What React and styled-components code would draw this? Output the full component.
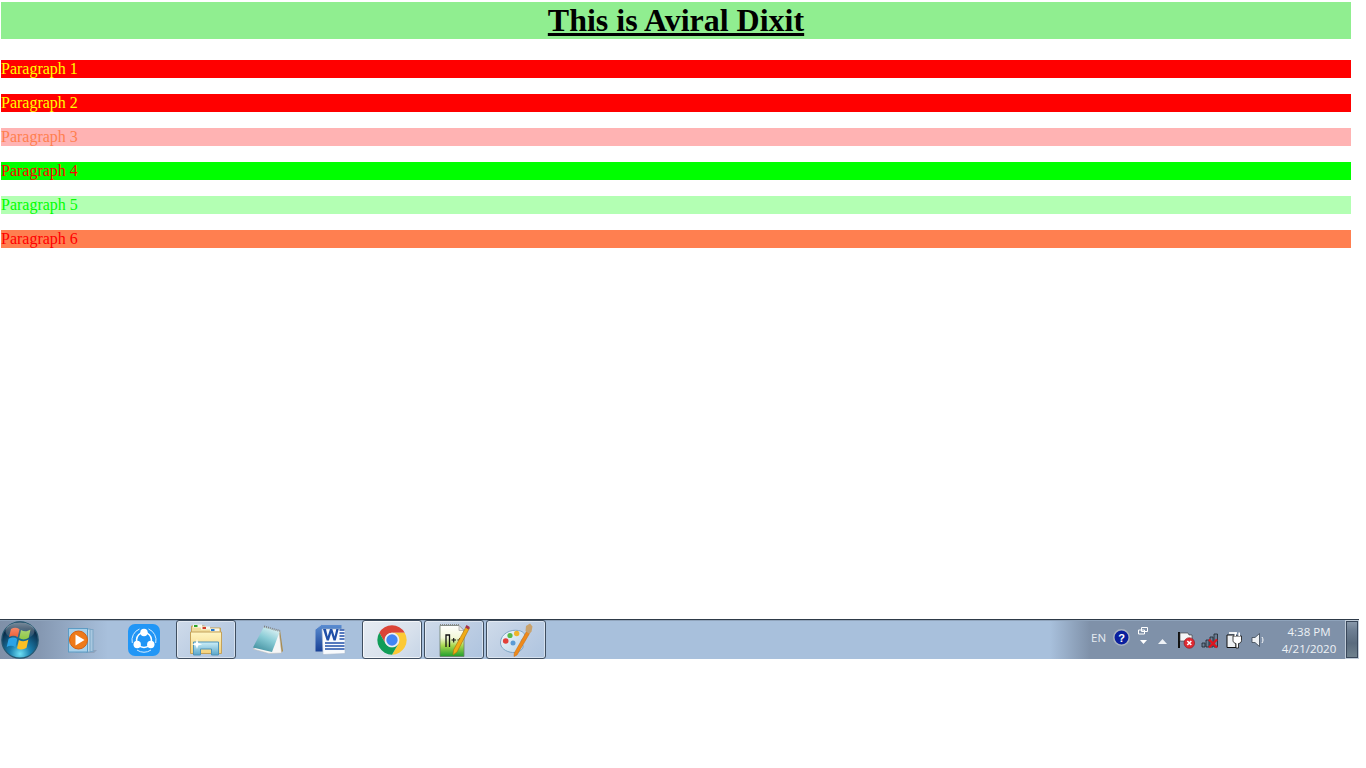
import React from "react";
import styled, { createGlobalStyle } from "styled-components";

const Global = createGlobalStyle`
  html, body { margin: 0; padding: 0; background: #fff; }
  body { font-family: "Liberation Serif", "Times New Roman", serif; overflow: hidden; }
`;

const Screen = styled.div`
  display: flex;
  flex-direction: column;
  width: 1366px;
  height: 768px;
`;

const Document = styled.main`
  display: flex;
  flex-direction: column;
  gap: 16px;
  box-sizing: border-box;
  height: 619px;
  padding: 2px 15px 0 1px;
`;

const Heading = styled.h1`
  margin: 0 0 5px;
  background: #90ee90;
  color: #000;
  font-size: 32px;
  line-height: 37px;
  font-weight: bold;
  text-align: center;
  text-decoration: underline;
`;

const Paragraph = styled.p`
  margin: 0;
  height: 18px;
  font-size: 16px;
  line-height: 18px;
  background: ${(p) => p.$bg};
  color: ${(p) => p.$fg};
`;

const Taskbar = styled.footer`
  display: flex;
  align-items: stretch;
  box-sizing: border-box;
  width: 1359px;
  height: 40px;
  border-top: 1px solid #2e3a48;
  background: linear-gradient(90deg, #7f90a8 0, #8598b2 40px, #a8c0dc 108px, #a8c0dc 1050px, #7f91a9 1090px, #7f91a9 100%);
  box-shadow: inset 0 1px 0 #8fa3bb;
`;

const StartOrb = styled.div`
  display: flex;
  align-items: center;
  justify-content: center;
  width: 40px;
  margin-right: 12px;
`;

const TaskList = styled.div`
  display: flex;
  gap: 2px;
`;

const TaskButton = styled.div`
  display: flex;
  align-items: center;
  justify-content: center;
  box-sizing: border-box;
  width: 60px;
  height: 39px;
  border-radius: 3px;
  ${(p) =>
    p.$state === "open" &&
    `
    border: 1px solid #3f4e60;
    box-shadow: inset 0 0 0 1px rgba(255,255,255,.45);
    background: linear-gradient(135deg, #cfdbea 0%, #bccde3 55%, #aec4df 100%);
  `}
  ${(p) =>
    p.$state === "active" &&
    `
    border: 1px solid #3f4e60;
    box-shadow: inset 0 0 0 1px rgba(255,255,255,.7);
    background: linear-gradient(135deg, #e6ecf3 0%, #d8e1ec 60%, #c6d4e6 100%);
  `}
`;

const Tray = styled.div`
  display: flex;
  align-items: center;
  margin-left: auto;
  height: 39px;
`;

const Lang = styled.span`
  width: 21px;
  margin-bottom: 5px;
  font-family: "Open Sans", "Noto Sans", sans-serif;
  font-size: 11.5px;
  color: #e6ebf1;
`;

const TraySlot = styled.div`
  display: flex;
  align-items: center;
  justify-content: center;
  width: ${(p) => p.$w || 24}px;
`;

const HelpSlot = styled(TraySlot)`
  margin-bottom: 5px;
`;

const LayoutSwitch = styled(TraySlot)`
  flex-direction: column;
  box-sizing: border-box;
  padding-left: 6px;
  margin-bottom: 8px;
`;

const Clock = styled.div`
  display: flex;
  flex-direction: column;
  align-items: center;
  gap: 2px;
  width: 70px;
  margin: 0 1px 0 4px;
  font-family: "Open Sans", "Noto Sans", sans-serif;
  font-size: 11.5px;
  line-height: 15px;
  color: #eef2f6;
`;

const ShowDesktop = styled.div`
  box-sizing: border-box;
  width: 14px;
  height: 39px;
  border: 1px solid #c0ccd9;
  outline: 1px solid #39475a;
  outline-offset: -2px;
  background: linear-gradient(180deg, #8b9aac 0, #6e7f93 25%, #5a6b7e 60%, #71838f 100%);
`;

const Orb = () => (
  <svg width="38" height="38" viewBox="0 0 38 38">
    <defs>
      <radialGradient id="orbG" cx="50%" cy="88%" r="72%">
        <stop offset="0" stopColor="#6fe0f5" />
        <stop offset=".4" stopColor="#1a7fae" />
        <stop offset="1" stopColor="#0b2a47" />
      </radialGradient>
      <linearGradient id="orbS" x1="0" y1="0" x2="0" y2="1">
        <stop offset="0" stopColor="#fff" stopOpacity=".45" />
        <stop offset="1" stopColor="#fff" stopOpacity=".02" />
      </linearGradient>
    </defs>
    <circle cx="19" cy="19" r="18.2" fill="url(#orbG)" stroke="#24566f" strokeWidth="1.2" />
    <path d="M10 8c3-1.800 5.800-1.600 8.500 .2l-1.800 8c-2.700-1.800-5.700-1.800-8.700-.2z" fill="#ee5226" />
    <path d="M20 9c3 1.800 6 1.800 9.500-.5l-1.800 8.200c-3.300 2.200-6.500 2.200-9.500 .4z" fill="#8cc63f" />
    <path d="M7.600 17.800c3-1.600 6-1.600 8.700 .2l-1.900 8.200c-2.800-1.800-5.800-1.800-8.700-.2z" fill="#2ba3e6" />
    <path d="M17.900 18.900c3 1.800 6.200 1.800 9.500-.4l-1.900 8.300c-3.300 2.200-6.500 2.200-9.500 .4z" fill="#fbbf24" />
    <ellipse cx="19" cy="10" rx="14.500" ry="8.500" fill="url(#orbS)" />
  </svg>
);

const MediaPlayer = () => (
  <svg width="32" height="32" viewBox="0 0 32 32">
    <path d="M20 26h11l-3 3h-8z" fill="#7d8ea3" opacity=".5" />
    <rect x="13" y="5.500" width="14" height="22" fill="#a9c8e0" stroke="#7ba6c6" />
    <rect x="10" y="5" width="14" height="23" fill="#bcd7ea" stroke="#7ba6c6" />
    <rect x="2.500" y="4.500" width="19" height="23.500" fill="#a8d0ea" stroke="#5d9cc4" />
    <circle cx="12.500" cy="16" r="9" fill="#ee7a1a" stroke="#d55f0e" />
    <path d="M9.500 10.500 18.500 16l-9 5.500z" fill="#fff" />
  </svg>
);

const ShareIt = () => (
  <svg width="32" height="32" viewBox="0 0 32 32">
    <rect width="32" height="32" rx="7" fill="#2196f6" />
    <path d="M4.300 19A12 12 0 0 1 11.500 5M20.500 5A12 12 0 0 1 27.700 19M23 26A12 12 0 0 1 9 26" fill="none" stroke="#d4ecff" strokeWidth="1" />
    <circle cx="16" cy="16" r="7.500" fill="none" stroke="#fff" strokeWidth="1.500" />
    <circle cx="16" cy="8.500" r="3.700" fill="#fff" />
    <circle cx="9.200" cy="20.500" r="3.700" fill="#fff" />
    <circle cx="22.800" cy="20.500" r="3.700" fill="#fff" />
  </svg>
);

const Explorer = () => (
  <svg width="34" height="33" viewBox="0 0 34 33">
    <defs>
      <linearGradient id="fold" x1="0" y1="0" x2="0" y2="1">
        <stop offset="0" stopColor="#fff6c4" />
        <stop offset="1" stopColor="#f5d27c" />
      </linearGradient>
      <linearGradient id="stand" x1="0" y1="0" x2="0" y2="1">
        <stop offset="0" stopColor="#cdeff8" />
        <stop offset="1" stopColor="#5aa6c9" />
      </linearGradient>
    </defs>
    <path d="M2.500 3h13l2 2h14v7h-29z" fill="#efdc9b" stroke="#c4a25a" />
    <rect x="4" y="1.500" width="9" height="3" fill="#f8f8ee" />
    <rect x="5" y="2" width="3.500" height="2" fill="#2ba52b" />
    <rect x="12" y="3.500" width="9" height="3" fill="#f8f8ee" />
    <rect x="13.500" y="4" width="3.500" height="2" fill="#d23b2b" />
    <rect x="21" y="5.500" width="9" height="3" fill="#f8f8ee" />
    <rect x="22" y="6" width="3.500" height="2" fill="#2478d0" />
    <path d="M1.500 9h31v21.500h-31z" fill="url(#fold)" stroke="#c4a25a" />
    <path d="M4.500 19h25v13h-7v-6h-11v6h-7z" fill="url(#stand)" stroke="#4f93b8" />
    <path d="M8 16l1.200 4 4 1.200-4 1.200L8 26l-1.200-3.600-4-1.200 4-1.200z" fill="#fff" />
  </svg>
);

const NotepadIcon = () => (
  <svg width="34" height="32" viewBox="0 0 34 32">
    <defs>
      <linearGradient id="pad" x1=".7" y1="0" x2=".2" y2="1">
        <stop offset="0" stopColor="#dff3f5" />
        <stop offset=".45" stopColor="#8accd6" />
        <stop offset="1" stopColor="#3f8d9d" />
      </linearGradient>
    </defs>
    <path d="M29 6 32 27l-2 2-3-19z" fill="#a88a4c" />
    <path d="M28 7 30.500 29 18 29.500 2 25l2-1z" fill="#f6f6f6" stroke="#bcbcbc" strokeWidth=".5" />
    <path d="M13 2.500 29 7l-8 21L2 23.500z" fill="url(#pad)" />
    <path d="M13 2.500 29 7" stroke="#7f7f7f" strokeWidth="2" strokeDasharray="1 1" />
  </svg>
);

const Word = () => (
  <svg width="32" height="32" viewBox="0 0 32 32">
    <defs>
      <linearGradient id="wblue" x1="0" y1="0" x2="0" y2="1">
        <stop offset="0" stopColor="#5b8ed2" />
        <stop offset="1" stopColor="#173f95" />
      </linearGradient>
    </defs>
    <path d="M1 5.500 7.500 .5H28v6L18 28H1z" fill="url(#wblue)" stroke="#a9bedb" />
    <path d="M8 5h23v24.500L9 30.500z" fill="#f8fafd" stroke="#aab8cc" strokeWidth=".6" />
    <path d="M9 5h3l1.700 7.500L16 5h2.300l2.300 7.500L22.300 5h2.400l-3 11.500h-2.200L17.200 9l-2.300 7.500h-2.200z" fill="#1f4fa8" />
    <path d="M25.500 6h5M25.500 9h5M25.500 12h5M25.500 15h5M11 19h19.500M11 22h19.500M11 25h19.500" stroke="#1f4fa8" strokeWidth="1.400" />
  </svg>
);

const Chrome = () => (
  <svg width="32" height="32" viewBox="0 0 48 48">
    <path d="M4.950 13A22 22 0 0 1 43.050 13H24A11 11 0 0 0 14.470 29.500z" fill="#db4437" />
    <path d="M43.050 13A22 22 0 0 1 24 46L33.530 29.500A11 11 0 0 0 24 13z" fill="#fcc934" />
    <path d="M24 46A22 22 0 0 1 4.950 13L14.470 29.500A11 11 0 0 0 33.530 29.500z" fill="#109d58" />
    <circle cx="24" cy="24" r="10.800" fill="#f1f1f1" />
    <circle cx="24" cy="24" r="8.500" fill="#4285f4" />
  </svg>
);

const NotepadPlus = () => (
  <svg width="32" height="34" viewBox="0 0 32 34">
    <defs>
      <linearGradient id="npp" x1="0" y1="0" x2="0" y2="1">
        <stop offset="0" stopColor="#fff" />
        <stop offset=".4" stopColor="#f2f8d8" />
        <stop offset=".65" stopColor="#a9d84e" />
        <stop offset="1" stopColor="#1f9e2e" />
      </linearGradient>
    </defs>
    <path d="M2 2.500h19l5 5v26H2z" fill="url(#npp)" stroke="#6d7f6d" strokeWidth=".8" />
    <path d="M2 2h19" stroke="#8a8a8a" strokeWidth="2" strokeDasharray="1 1" />
    <path d="M21 2.500v5h5z" fill="#e8e8e8" stroke="#999" strokeWidth=".6" />
    <path d="M8 24V12h3.500v12" fill="none" stroke="#111" strokeWidth="1.300" />
    <path d="M13.500 17h4.500M15.700 15v4.500M19.500 17h4.500M21.700 15v4.500" fill="none" stroke="#111" strokeWidth="1.100" />
    <path d="M28.500 3 31.500 5 19 29l-4 3 .5-5z" fill="#f0ac17" stroke="#a96f0a" strokeWidth=".6" />
    <path d="M28.500 2 31.800 4 30.500 6.500 27.300 4.500z" fill="#a5324e" />
  </svg>
);

const Paint = () => (
  <svg width="34" height="34" viewBox="0 0 34 34">
    <defs>
      <linearGradient id="pal" x1="0" y1="0" x2="1" y2="1">
        <stop offset="0" stopColor="#f4f8fb" />
        <stop offset="1" stopColor="#b8d3e8" />
      </linearGradient>
    </defs>
    <path d="M1.500 19C2 11 11 6 19.500 7.500c6 1 7.500 5 5 7.500-3 2.500-3 4.500-1 6.500 2.500 3-2 8.500-10 8C7 29 1 25 1.500 19z" fill="url(#pal)" stroke="#7ea5c6" />
    <circle cx="6.700" cy="18" r="2.800" fill="#e2403a" />
    <circle cx="11" cy="12.500" r="2.600" fill="#58b94a" />
    <circle cx="17.700" cy="10.500" r="2.700" fill="#f0b429" />
    <circle cx="14" cy="20" r="2.500" fill="#5b9bd5" />
    <path d="M27.500 8.500 30.500 10.500 18 32l-3 1.500 .3-3.500z" fill="#ee8a1b" stroke="#c76a0c" strokeWidth=".5" />
    <path d="M26.500 8 27 3l4-2.500 2.500 3-1 5-2 2.500z" fill="#c9a26c" />
  </svg>
);

const Help = () => (
  <svg width="17" height="17" viewBox="0 0 17 17">
    <circle cx="8.500" cy="8.500" r="7.700" fill="#0a1f9e" stroke="#aab4c0" strokeWidth="1.500" />
    <text x="8.500" y="12.500" textAnchor="middle" fontSize="11" fontWeight="bold" fontFamily="Liberation Sans, sans-serif" fill="#fff">?</text>
  </svg>
);

const Windows = () => (
  <svg width="10" height="8" viewBox="0 0 10 8">
    <path d="M3.500.500h6v4h-6zM.500 3h6v4h-6z" fill="#7f91a9" stroke="#fff" />
  </svg>
);

const Down = () => (
  <svg width="7" height="4" viewBox="0 0 7 4" style={{ marginTop: 5 }}>
    <path d="M0 0h7L3.500 4z" fill="#fff" />
  </svg>
);

const Up = () => (
  <svg width="9" height="5" viewBox="0 0 9 5" style={{ marginTop: 3 }}>
    <path d="M4.500 0 9 5H0z" fill="#eef2f6" />
  </svg>
);

const Cross = ({ x, y }) => (
  <path d={`M${x} ${y}l8 8m0-8l-8 8`} stroke="#e0141c" strokeWidth="2.400" fill="none" />
);

const Flag = () => (
  <svg width="18" height="18" viewBox="0 0 18 18">
    <path d="M2 1v16" stroke="#111" strokeWidth="2" />
    <path d="M3 2h8l1 2h3v6H3z" fill="#f4f6f8" stroke="#333" strokeWidth=".6" />
    <circle cx="12.300" cy="12" r="5.300" fill="#e02a32" stroke="#8a1a20" strokeWidth=".6" />
    <path d="M10.300 10l4 4m0-4l-4 4" stroke="#fff" strokeWidth="1.600" />
  </svg>
);

const Signal = () => (
  <svg width="18" height="18" viewBox="0 0 18 18">
    <path d="M1 12h3v4H1zM5 9h3v7H5zM9 6h3v10H9zM13 3h3.500v13H13z" fill="#6d7f94" stroke="#1d232b" strokeWidth=".8" />
    <Cross x={8} y={8.500} />
  </svg>
);

const Power = () => (
  <svg width="18" height="18" viewBox="0 0 18 18">
    <path d="M2 4h9v12.500H2z" fill="#eef1f4" stroke="#111" />
    <path d="M4 2h8" stroke="#eef1f4" strokeWidth="2" />
    <path d="M8 5h8.500v4.500c0 2-2 3-3 3v4.500h-2.500v-4.500c-1 0-3-1-3-3z" fill="#fff" stroke="#111" strokeWidth=".8" />
    <path d="M10.300 1.500v3.500M14.200 1.500v3.500" stroke="#fff" strokeWidth="1.600" />
  </svg>
);

const Speaker = () => (
  <svg width="16" height="18" viewBox="0 0 16 18">
    <path d="M2 6.500h3L9.500 2.500v13L5 11.500H2z" fill="#eef1f4" stroke="#3a4552" strokeWidth=".8" />
    <path d="M12 6c1.300 1.800 1.300 4.200 0 6" fill="none" stroke="#fff" strokeWidth="1" />
  </svg>
);

const paragraphs = [
  { text: "Paragraph 1", bg: "#ff0000", fg: "#ffff00" },
  { text: "Paragraph 2", bg: "#ff0000", fg: "#ffff00" },
  { text: "Paragraph 3", bg: "#ffb3b3", fg: "#ff7f50" },
  { text: "Paragraph 4", bg: "#00ff00", fg: "#ff0000" },
  { text: "Paragraph 5", bg: "#b3ffb3", fg: "#00ff00" },
  { text: "Paragraph 6", bg: "#ff7f50", fg: "#ff0000" },
];

const tasks = [
  { key: "wmp", Icon: MediaPlayer },
  { key: "share", Icon: ShareIt },
  { key: "explorer", Icon: Explorer, state: "open" },
  { key: "notepad", Icon: NotepadIcon },
  { key: "word", Icon: Word },
  { key: "chrome", Icon: Chrome, state: "active" },
  { key: "npp", Icon: NotepadPlus, state: "open" },
  { key: "paint", Icon: Paint, state: "open" },
];

export default function App() {
  return (
    <Screen>
      <Global />
      <Document>
        <Heading>This is Aviral Dixit</Heading>
        {paragraphs.map((p) => (
          <Paragraph key={p.text} $bg={p.bg} $fg={p.fg}>
            {p.text}
          </Paragraph>
        ))}
      </Document>
      <Taskbar>
        <StartOrb>
          <Orb />
        </StartOrb>
        <TaskList>
          {tasks.map(({ key, Icon, state }) => (
            <TaskButton key={key} $state={state}>
              <Icon />
            </TaskButton>
          ))}
        </TaskList>
        <Tray>
          <Lang>EN</Lang>
          <HelpSlot $w={18}><Help /></HelpSlot>
          <LayoutSwitch $w={20}>
            <Windows />
            <Down />
          </LayoutSwitch>
          <TraySlot $w={24}><Up /></TraySlot>
          <TraySlot $w={24}><Flag /></TraySlot>
          <TraySlot $w={24}><Signal /></TraySlot>
          <TraySlot $w={24}><Power /></TraySlot>
          <TraySlot $w={24}><Speaker /></TraySlot>
          <Clock>
            <span>4:38 PM</span>
            <span>4/21/2020</span>
          </Clock>
          <ShowDesktop />
        </Tray>
      </Taskbar>
    </Screen>
  );
}
